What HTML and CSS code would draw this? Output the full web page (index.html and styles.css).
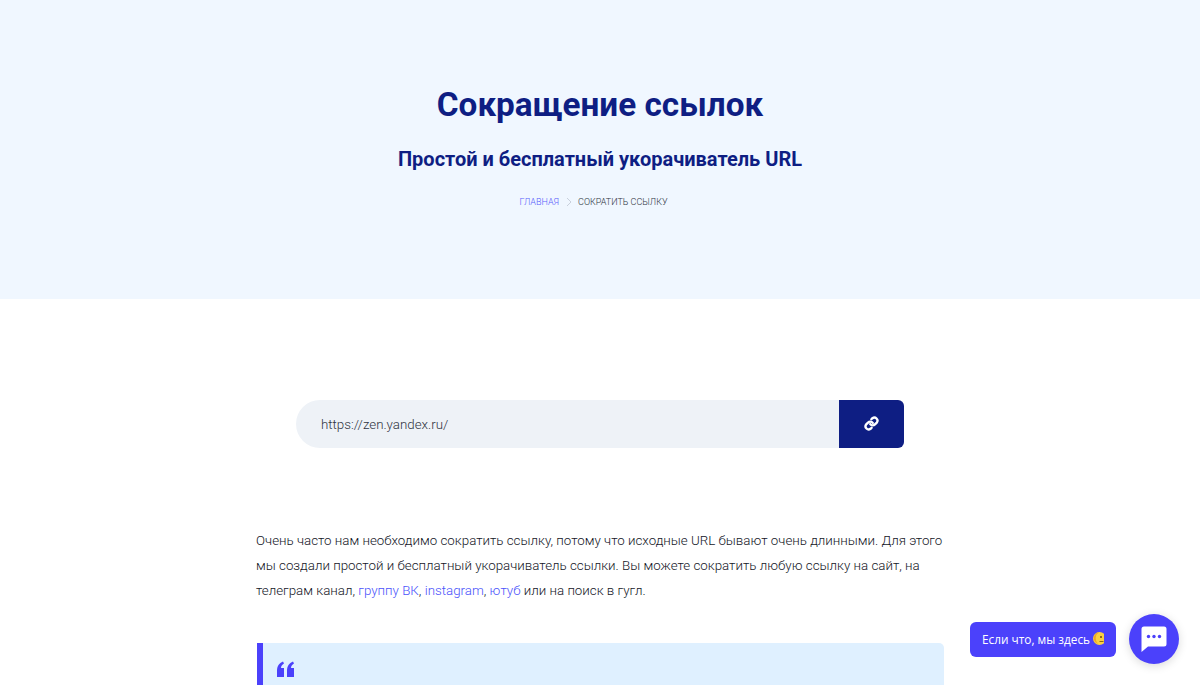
FILE: index.html
```html
<!DOCTYPE html>
<html lang="ru">
<head>
    <meta charset="UTF-8">
    <meta name="viewport" content="width=device-width, initial-scale=1.0">
    <title>Сокращение ссылок</title>
    <link rel="stylesheet" href="styles.css">
</head>
<body>
    <header class="hero">
        <h1>Сокращение ссылок</h1>
        <h2>Простой и бесплатный укорачиватель URL</h2>
        <nav class="crumbs">
            <a href="#">Главная</a>
            <svg class="crumb-arrow" viewBox="0 0 8 10" width="8" height="10"><path d="M2 1l4 4-4 4" fill="none" stroke="#c9d0dc" stroke-width="1"/></svg>
            <span>Сократить ссылку</span>
        </nav>
    </header>

    <main class="content">
        <form class="shortener">
            <input type="text" class="url-input" placeholder="https://zen.yandex.ru/">
            <button type="button" class="url-button" aria-label="Сократить">
                <svg class="link-icon" viewBox="0 0 24 24" width="15" height="15" fill="none" stroke="#fff" stroke-width="3.8" stroke-linecap="round" stroke-linejoin="round">
                    <path d="M10 13a5 5 0 0 0 7.500.5l3-3a5 5 0 0 0-7-7l-1.700 1.700"/>
                    <path d="M14 11a5 5 0 0 0-7.500-.5l-3 3a5 5 0 0 0 7 7l1.700-1.700"/>
                </svg>
            </button>
        </form>

        <p class="intro">Очень часто нам необходимо сократить ссылку, потому что исходные URL бывают очень длинными. Для этого мы создали простой и бесплатный укорачиватель ссылки. Вы можете сократить любую ссылку на сайт, на телеграм канал, <a href="#">группу ВК</a>, <a href="#">instagram</a>, <a href="#">ютуб</a> или на поиск в гугл.</p>

        <blockquote class="quote">
            <svg class="quote-mark" viewBox="0 0 18 16" width="18" height="16"><path d="M1 16V9.500C1 5.500 3 2 7 0.500L8 2.500C6 3.600 5.200 5 5 7H8V16ZM11 16V9.500C11 5.500 13 2 17 0.500L18 2.500C16 3.600 15.200 5 15 7H18V16Z" fill="#4b41fb"/></svg>
        </blockquote>
    </main>

    <div class="chat">
        <div class="chat-label">
            <span>Если что, мы здесь</span>
            <svg class="chat-emoji" viewBox="0 0 11 15" width="11" height="15">
                <circle cx="6.500" cy="7.500" r="6.500" fill="#fbd040"/>
                <path d="M1 9a6.500 6.500 0 0 1 5-8 8 8 0 0 0-1 12 6.500 6.500 0 0 1-4-4z" fill="#eda628"/>
                <circle cx="8" cy="6" r="1" fill="#6b4a12"/>
                <path d="M6.500 10.500h4" stroke="#6b4a12" stroke-width="0.800"/>
            </svg>
        </div>
        <button type="button" class="chat-button" aria-label="Чат">
            <svg viewBox="0 0 26 26" width="26" height="26">
                <path d="M3 0.500H23A2.500 2.500 0 0 1 25.500 3V18A2.500 2.500 0 0 1 23 20.500H7L0.500 26V3A2.500 2.500 0 0 1 3 0.500Z" fill="#fff"/>
                <circle cx="7.500" cy="10.500" r="1.700" fill="#4b41fb"/>
                <circle cx="13" cy="10.500" r="1.700" fill="#4b41fb"/>
                <circle cx="18.500" cy="10.500" r="1.700" fill="#4b41fb"/>
            </svg>
        </button>
    </div>
</body>
</html>
```

FILE: styles.css
```css
html, body {
    height: 100%;
}
body {
    margin: 0;
    overflow: hidden;
    font-family: Roboto, "Liberation Sans", sans-serif;
    background-color: #fff;
    color: #14161f;
}
a {
    color: #4b53fb;
    text-decoration: none;
}
.hero {
    height: 299px;
    box-sizing: border-box;
    padding-top: 84px;
    background-color: #f0f7ff;
    text-align: center;
    color: #0e1e83;
}
.hero h1 {
    margin: 0;
    font-size: 33.300px;
    line-height: 41px;
    font-weight: 700;
}
.hero h2 {
    margin: 21px 0 0;
    font-size: 20px;
    line-height: 26px;
    font-weight: 700;
}
.crumbs {
    display: flex;
    justify-content: center;
    align-items: center;
    gap: 5.500px;
    margin-top: 23px;
    padding-right: 13px;
    font-size: 9px;
    font-weight: 300;
    line-height: 14px;
    text-transform: uppercase;
    color: #2e3442;
}
.crumbs a {
    color: #5a60fb;
}
.content {
    width: 688px;
    margin: 0 auto;
    padding-top: 101px;
}
.shortener {
    display: flex;
    width: 608px;
    height: 48px;
    margin: 0 auto;
}
.url-input {
    flex: 1;
    min-width: 0;
    padding: 0 25px;
    border: none;
    border-radius: 24px 0 0 24px;
    background-color: #eef2f7;
    font-family: inherit;
    font-size: 13.300px;
    font-weight: 300;
    outline: none;
}
.url-input::placeholder {
    color: #2e3442;
    opacity: 1;
}
.url-button {
    display: flex;
    justify-content: center;
    align-items: center;
    width: 65px;
    padding: 0 0 2px;
    border: none;
    border-radius: 0 6px 6px 0;
    background-color: #0e1e83;
    cursor: pointer;
}
.intro {
    margin: 80px 0 0;
    font-size: 13.330px;
    line-height: 25px;
    font-weight: 300;
}
.quote {
    height: 120px;
    margin: 40px 0 0 1px;
    padding: 18px 0 0 13px;
    box-sizing: border-box;
    border-left: 6px solid #4b41fb;
    border-radius: 0 5px 5px 0;
    background-color: #dff0ff;
}
.chat {
    position: fixed;
    right: 21px;
    bottom: 21px;
    display: flex;
    align-items: center;
    gap: 13px;
}
.chat-label {
    display: flex;
    align-items: center;
    gap: 3px;
    height: 35px;
    padding: 0 12px 1px;
    box-sizing: border-box;
    border-radius: 6px;
    background-color: #4b41fb;
    color: #fff;
    font-family: "Open Sans", sans-serif;
    font-size: 11.800px;
}
.chat-button {
    display: flex;
    justify-content: center;
    align-items: center;
    width: 50px;
    height: 50px;
    padding: 0;
    border: none;
    border-radius: 50%;
    background-color: #4b41fb;
    box-shadow: 0 2px 10px rgba(0,0,0,0.15);
    cursor: pointer;
}
```
